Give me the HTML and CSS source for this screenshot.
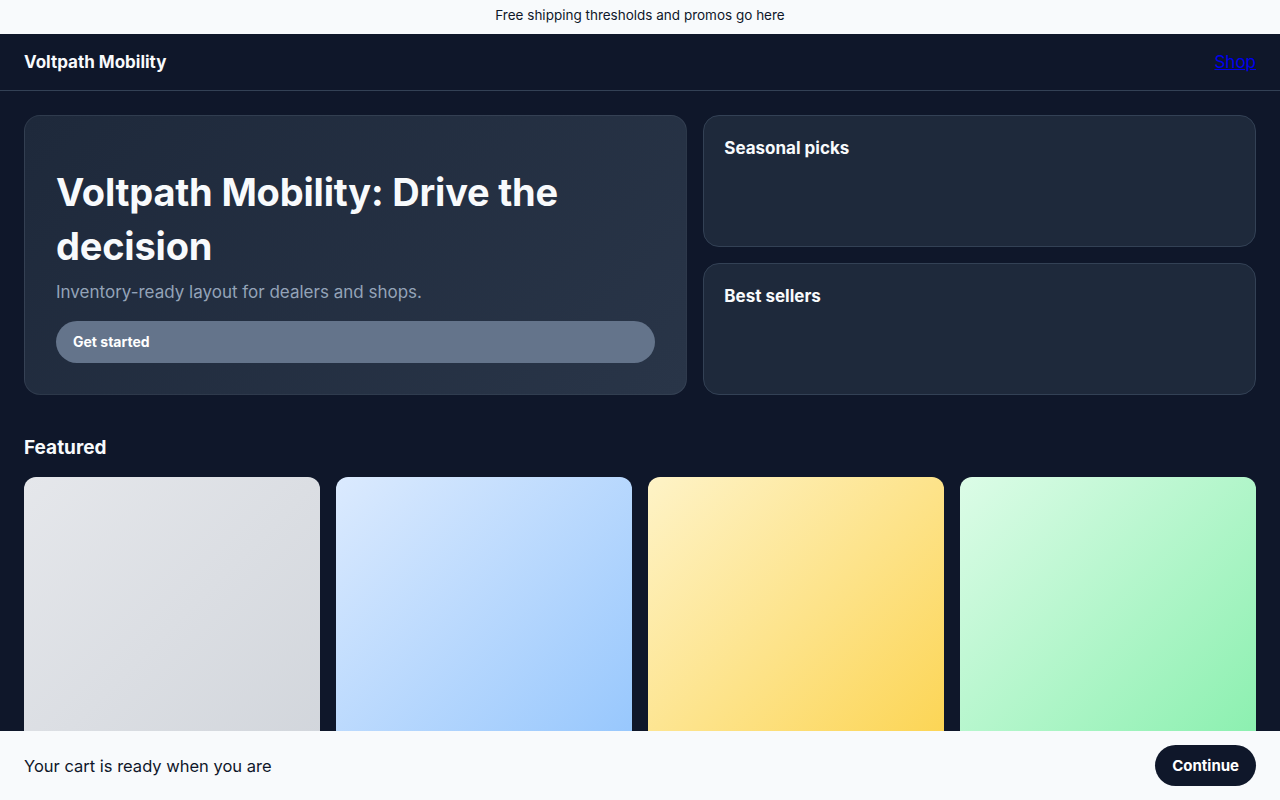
FILE: index.html
```html
<!DOCTYPE html>
<html lang="en">
<head>
  <meta charset="UTF-8" />
  <title>Voltpath Mobility</title>
  <link rel="stylesheet" href="styles.css">
</head>
<body>
  <div class="promo">Free shipping thresholds and promos go here</div>

  <header class="topbar">
    <div class="brand">Voltpath Mobility</div>
    <nav><a href="#">Shop</a></nav>
  </header>

  <main class="page">
    <section class="hero-grid">
      <div class="hero">
        <h1>Voltpath Mobility: Drive the decision</h1>
        <p class="lead">Inventory-ready layout for dealers and shops.</p>
        <a class="cta" href="#">Get started</a>
      </div>
      <div class="side">
        <div class="panel"><h3>Seasonal picks</h3></div>
        <div class="panel"><h3>Best sellers</h3></div>
      </div>
    </section>

    <section class="featured">
      <h2>Featured</h2>
      <div class="products">
        <div class="product gray"></div>
        <div class="product blue"></div>
        <div class="product yellow"></div>
        <div class="product green"></div>
      </div>
    </section>
  </main>

  <div class="cartbar">
    <span>Your cart is ready when you are</span>
    <button class="continue">Continue</button>
  </div>
</body>
</html>
```

FILE: styles.css
```css
* {
  box-sizing: border-box;
  margin: 0;
  padding: 0;
}

body {
  font-family: Inter, 'Noto Sans', sans-serif;
  background: #0f172a;
  color: #f8fafc;
  min-height: 100vh;
}

.promo {
  background: #f8fafc;
  color: #0f172a;
  text-align: center;
  font-size: 13.5px;
  height: 34px;
  line-height: 31px;
}

.topbar {
  display: flex;
  justify-content: space-between;
  align-items: center;
  height: 57px;
  padding: 0 24px;
  border-bottom: 1px solid #334155;
}

.brand {
  font-weight: 700;
  font-size: 17px;
}

.topbar a {
  font-size: 17px;
  color: #0000ee;
  text-decoration: underline;
}

.page {
  padding: 24px;
}

.hero-grid {
  display: grid;
  grid-template-columns: 1.2fr 1fr;
  gap: 16px;
}

.hero {
  display: flex;
  flex-direction: column;
  justify-content: flex-end;
  padding: 31px;
  border-radius: 16px;
  border: 1px solid rgba(148, 163, 184, 0.12);
  background: linear-gradient(135deg, #1e293b, #293548);
}

.hero h1 {
  font-size: 38px;
  line-height: 54px;
  font-weight: 700;
  letter-spacing: -0.2px;
}

.lead {
  margin-top: 7px;
  font-size: 17px;
  line-height: 24px;
  color: #94a3b8;
}

.cta {
  display: block;
  margin-top: 17px;
  height: 42px;
  line-height: 42px;
  padding: 0 17px;
  border-radius: 21px;
  background: #64748b;
  color: #fff;
  font-size: 14px;
  font-weight: 700;
  text-decoration: none;
}

.side {
  display: flex;
  flex-direction: column;
  gap: 16px;
}

.panel {
  height: 132px;
  padding: 21px 20px 20px;
  background: #1e293b;
  border: 1px solid #334155;
  border-radius: 16px;
}

.panel h3 {
  font-size: 17px;
  line-height: 22px;
  font-weight: 700;
}

.featured {
  margin-top: 41px;
}

.featured h2 {
  font-size: 19px;
  line-height: 24px;
  font-weight: 700;
  margin-bottom: 17px;
}

.products {
  display: grid;
  grid-template-columns: repeat(4, 1fr);
  gap: 16px;
}

.product {
  height: 296px;
  border-radius: 12px;
}

.gray { background: linear-gradient(135deg, #e5e7eb, #d1d5db); }
.blue { background: linear-gradient(135deg, #dbeafe, #93c5fd); }
.yellow { background: linear-gradient(135deg, #fef3c7, #fcd34d); }
.green { background: linear-gradient(135deg, #dcfce7, #86efac); }

.cartbar {
  position: fixed;
  left: 0;
  right: 0;
  bottom: 0;
  height: 69px;
  display: flex;
  justify-content: space-between;
  align-items: center;
  padding: 0 24px;
  background: #f8fafc;
  color: #0f172a;
  font-size: 16.5px;
}

.continue {
  font-family: inherit;
  font-size: 15px;
  font-weight: 700;
  color: #fff;
  background: #0f172a;
  border: none;
  border-radius: 21px;
  height: 41px;
  padding: 0 17px;
}
```
